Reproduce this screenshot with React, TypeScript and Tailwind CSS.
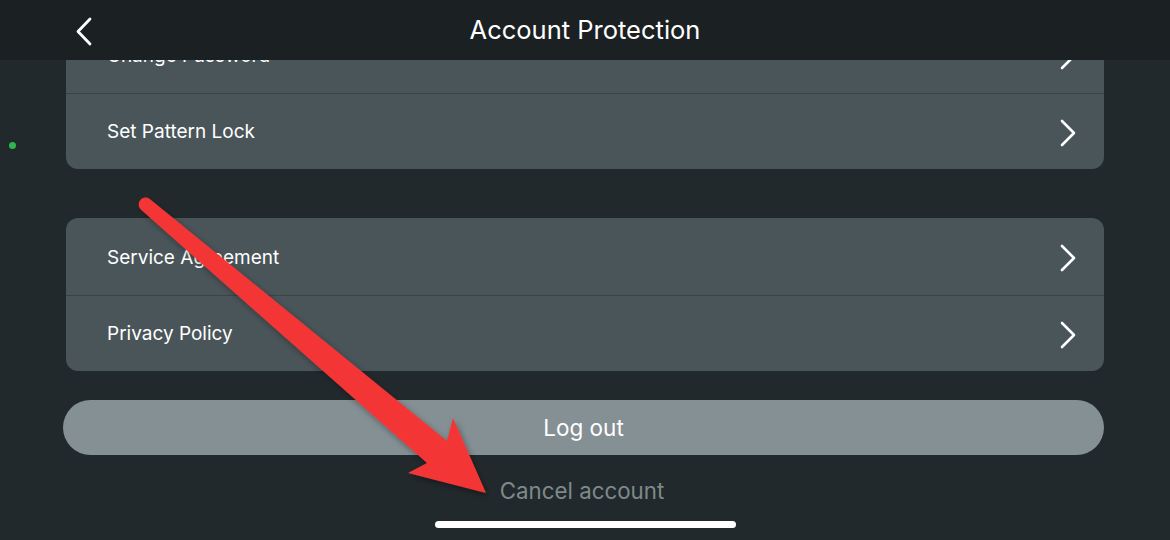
import React from "react"

const font = { fontFamily: "Inter, 'Liberation Sans', sans-serif" }

function Chevron() {
  return (
    <svg width="18" height="28" viewBox="0 0 18 28" fill="none" className="shrink-0">
      <path d="M3 2 L15 14 L3 26" stroke="#ffffff" strokeWidth="2.6" strokeLinecap="round" strokeLinejoin="round" />
    </svg>
  )
}

function Row({ label, last }: { label: string; last?: boolean }) {
  return (
    <div
      className={
        "flex items-center justify-between pl-[41px] pr-[27px] " +
        (last ? "h-[75px] pt-[2px]" : "h-[78px] pt-[3px] border-b border-[#3a4447]")
      }
    >
      <span className="text-[19px] text-white">{label}</span>
      <Chevron />
    </div>
  )
}

export default function App() {
  return (
    <div className="relative w-[1170px] h-[540px] overflow-hidden bg-[#22292c]" style={font}>
      <div className="flex flex-col px-[66px] pt-[16px]">
        <div className="rounded-[12px] bg-[#4a5559] overflow-hidden">
          <Row label="Change Password" />
          <Row label="Set Pattern Lock" last />
        </div>

        <div className="mt-[49px] rounded-[12px] bg-[#4a5559] overflow-hidden">
          <Row label="Service Agreement" />
          <Row label="Privacy Policy" last />
        </div>

        <button className="mt-[29px] -ml-[3px] h-[55px] rounded-full bg-[#849094] text-[22.5px] text-white">
          Log out
        </button>

        <div className="mt-[19px] pr-[6px] text-center text-[22.3px] text-[#7e898b]">Cancel account</div>
      </div>

      <div className="absolute left-[435px] top-[521px] h-[7px] w-[301px] rounded-full bg-white" />

      <div className="absolute left-[9px] top-[142px] h-[7px] w-[7px] rounded-full bg-[#2db84d]" />

      {/* header overlays the scrolled list */}
      <div className="absolute inset-x-0 top-0 z-10 flex h-[60px] items-center justify-center bg-[#1b2022]">
        <svg className="absolute left-[75px] top-[17px]" width="18" height="29" viewBox="0 0 18 29" fill="none">
          <path d="M15 2 L3 14.5 L15 27" stroke="#ffffff" strokeWidth="2.8" strokeLinecap="round" strokeLinejoin="round" />
        </svg>
        <span className="text-[25.5px] text-white">Account Protection</span>
      </div>

      {/* annotation arrow */}
      <svg className="absolute inset-0 z-20 pointer-events-none" width="1170" height="540" viewBox="0 0 1170 540">
        <defs>
          <filter id="sh" x="-10%" y="-10%" width="120%" height="120%">
            <feDropShadow dx="2" dy="3" stdDeviation="3" floodColor="#000" floodOpacity="0.35" />
          </filter>
        </defs>
        <path
          d="M140.5 209.3 L427 463 L408 473 L486 493 L453 418 L447 441 L149.5 198.7 A7 7 0 0 0 140.5 209.3 Z"
          fill="#f43535"
          filter="url(#sh)"
        />
      </svg>
    </div>
  )
}
